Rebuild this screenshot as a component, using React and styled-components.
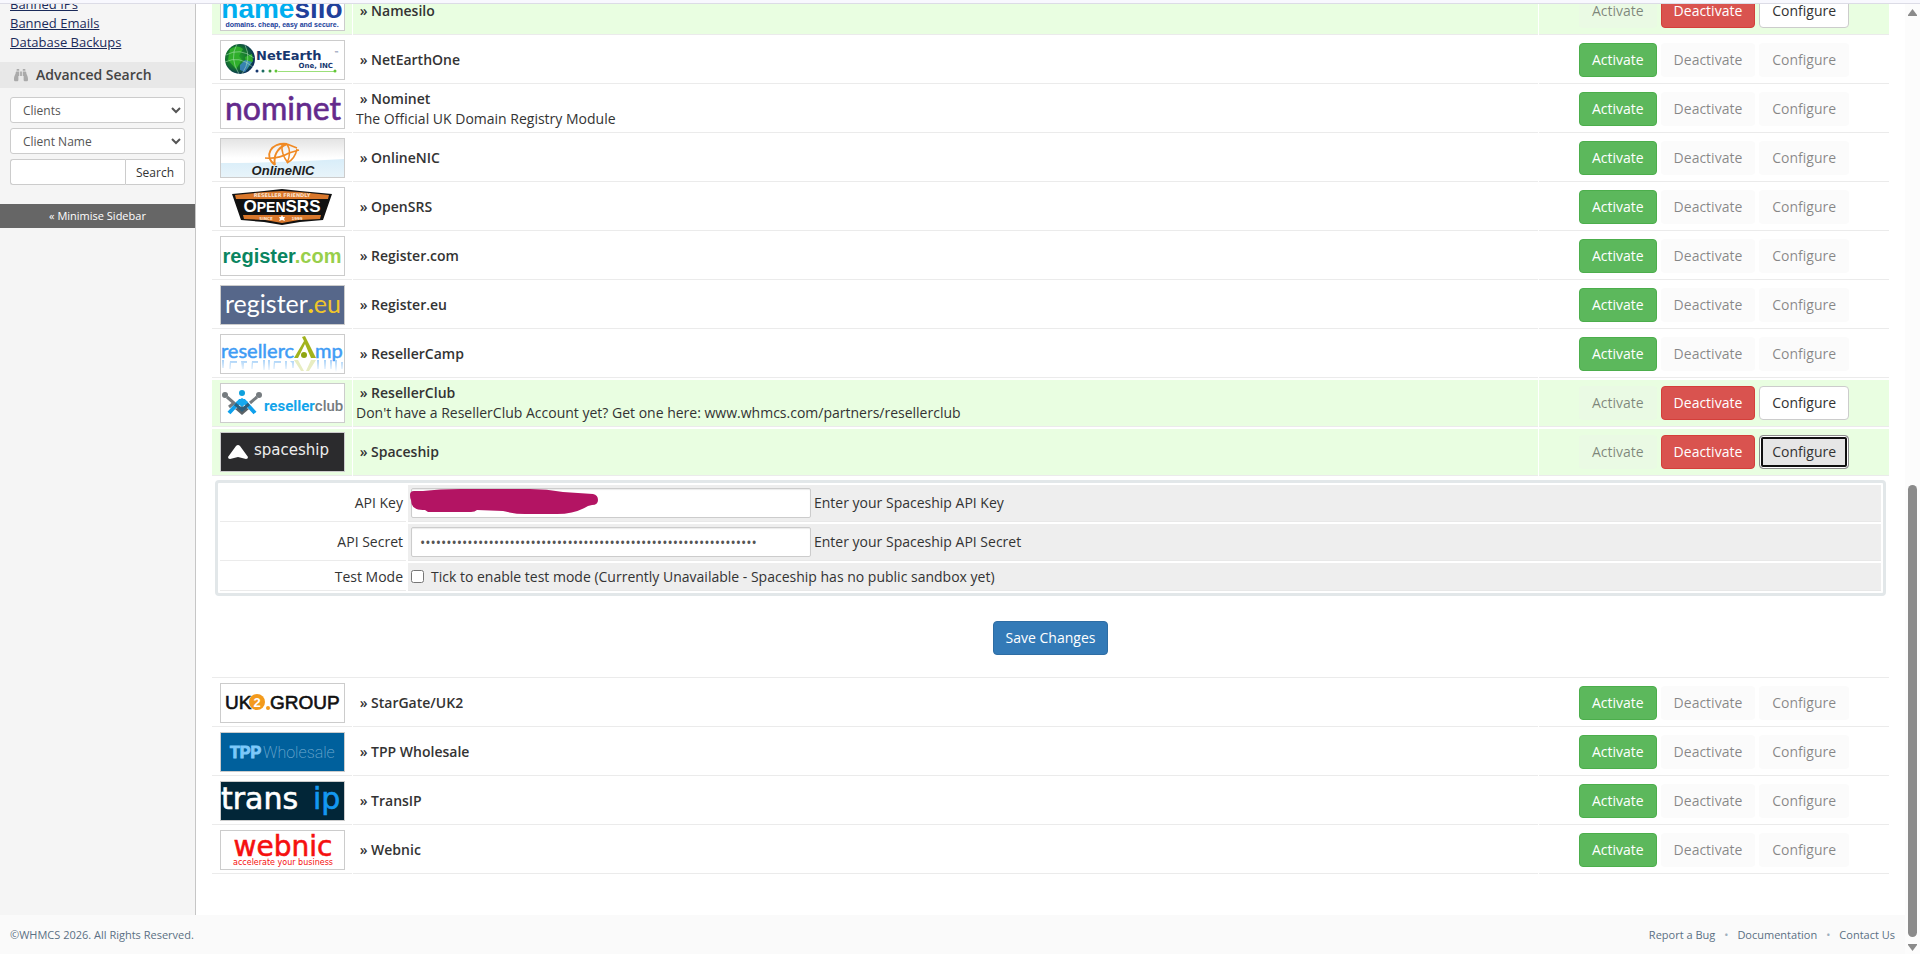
import styled, { createGlobalStyle, css } from "styled-components";
import { FaBinoculars } from "react-icons/fa";

const GlobalStyle = createGlobalStyle`
  * {
    box-sizing: border-box;
  }

  body {
    margin: 0;
    background: #fff;
    color: #333;
    font-family: "Open Sans", "Noto Sans", sans-serif;
    font-size: 14px;
    line-height: 20px;
  }

  button,
  input,
  select {
    font-family: inherit;
  }
`;

const Window = styled.div`
  display: flex;
  flex-direction: column;
  height: 100vh;
  overflow: hidden;
`;

const TopStrip = styled.div`
  flex: none;
  height: 4px;
  background: #f8f8fe;
  border-bottom: 1px solid #dcdce6;
`;

const Viewport = styled.div`
  display: flex;
  flex: 1;
  min-height: 0;
`;

const Scroller = styled.div`
  flex: 1;
  min-width: 0;
  overflow: hidden;
`;

// the page sits scrolled, so its first row runs under the top strip
const Scrolled = styled.div`
  margin-top: -18px;
`;

const Columns = styled.div`
  display: flex;
`;

const Footer = styled.footer`
  display: flex;
  align-items: center;
  justify-content: space-between;
  height: 39px;
  padding: 0 10px;
  background: #fafafa;
  color: #5a7084;
  font-size: 11px;
`;

const FooterLinks = styled.nav`
  display: flex;
  gap: 9px;

  a {
    color: inherit;
    text-decoration: none;
  }

  span {
    color: #9fb0bf;
  }
`;

/* scrollbar */

const Scrollbar = styled.div`
  display: flex;
  flex: none;
  flex-direction: column;
  align-items: center;
  width: 15px;
  padding: 5px 0 3px;
  background: #fcfcfc;
`;

const Thumb = styled.div`
  width: 9px;
  height: 48%;
  margin: auto 0 7px;
  border-radius: 5px;
  background: #8b8b8b;
`;

/* sidebar */

const Sidebar = styled.aside`
  flex: none;
  width: 196px;
  padding-top: 9px;
  border-right: 1px solid #c6c6c6;
  background: #f5f5f5;
`;

const LinkList = styled.ul`
  margin: 0 0 10px;
  padding: 0 10px;
  list-style: none;
  font-size: 13px;
  line-height: 19px;

  a {
    color: #1a2a5a;
  }
`;

const SidebarHeader = styled.h2`
  display: flex;
  align-items: center;
  gap: 8px;
  height: 26px;
  margin: 0;
  padding: 0 14px;
  background: #e8e8e8;
  color: #444;
  font-size: 14px;
  font-weight: 600;

  svg {
    color: #aaa;
  }
`;

const SearchForm = styled.form`
  display: flex;
  flex-direction: column;
  gap: 5px;
  padding: 9px 10px 19px;
`;

const control = css`
  height: 26px;
  border: 1px solid #ccc;
  border-radius: 3px;
  background: #fff;
  color: #555;
  font-size: 12px;
`;

const Select = styled.select`
  ${control}
  width: 100%;
  padding: 0 8px;
`;

const SearchGroup = styled.div`
  display: flex;
`;

const SearchInput = styled.input`
  ${control}
  flex: 1;
  min-width: 0;
  border-right: 0;
  border-radius: 3px 0 0 3px;
`;

const SearchButton = styled.button`
  ${control}
  width: 60px;
  padding: 0;
  border-radius: 0 3px 3px 0;
  color: #333;
`;

const MinimiseLink = styled.a`
  display: block;
  height: 24px;
  background: #666;
  color: #fff;
  font-size: 11px;
  line-height: 24px;
  text-align: center;
  text-decoration: none;
`;

/* registrar table */

const Main = styled.main`
  flex: 1;
  min-width: 0;
  padding: 0 15px 39px;
`;

const Registrars = styled.table`
  width: 100%;
  border-spacing: 1px 2px;
  table-layout: fixed;
`;

const LogoCol = styled.col`
  width: 140px;
`;

const ActionCol = styled.col`
  width: 350px;
`;

const Cell = styled.td`
  height: 47px;
  padding: 0 3px;
  border-bottom: 1px solid #ebebeb;
  background: ${(props) => (props.$active ? "#e9fee1" : "#fff")};
  text-align: ${(props) => props.$align || "left"};
  vertical-align: middle;
`;

const Name = styled.strong`
  display: block;
  font-weight: 600;
`;

const LogoBox = styled.div`
  width: 125px;
  height: 40px;
  margin: 0 auto;
  border: 1px solid #ccc;
  background: ${(props) => props.$bg || "#fff"};

  svg {
    display: block;
    width: 100%;
    height: 100%;
  }
`;

const Actions = styled.div`
  display: flex;
  justify-content: center;
  gap: 4px;
`;

const variants = {
  success: css`
    border-color: #4cae4c;
    background: #5cb85c;
    color: #fff;
  `,
  danger: css`
    border-color: #d43f3a;
    background: #d9534f;
    color: #fff;
  `,
  primary: css`
    border-color: #2e6da4;
    background: #337ab7;
    color: #fff;
  `,
  plain: css`
    border-color: #ccc;
    background: #fff;
    color: #333;
  `,
  focused: css`
    border-color: #8c8c8c;
    background: #e6e6e6;
    box-shadow: inset 0 0 0 1px #fff, inset 0 0 0 3px #101010;
    color: #333;
  `,
};

const Button = styled.button`
  height: 34px;
  padding: 0 12px;
  border: 1px solid transparent;
  border-radius: 4px;
  font-size: 14px;
  line-height: 20px;
  ${(props) => variants[props.$variant]}

  &:disabled {
    border-color: transparent;
    background: rgba(239, 239, 239, 0.25);
    color: rgba(16, 16, 16, 0.5);
  }
`;

/* module settings */

const ConfigCell = styled.td`
  padding: 2px 3px 22px;
  border-bottom: 1px solid #ebebeb;
`;

const Settings = styled.table`
  width: 100%;
  border: 3px solid #e2e7e9;
  border-radius: 4px;
  border-spacing: 2px;
  table-layout: fixed;
`;

const SettingLabel = styled.th`
  width: 186px;
  padding: 3px;
  border-bottom: 1px solid #ebebeb;
  font-weight: 400;
  text-align: right;
`;

const SettingField = styled.td`
  height: 28px;
  padding: 3px;
  border-bottom: 1px solid #e8e8e8;
  background: #eee;
`;

const FieldLine = styled.div`
  display: flex;
  align-items: center;
  gap: 3px;
`;

const Masked = styled.span`
  position: relative;
  width: 400px;

  svg {
    position: absolute;
    top: 0;
    left: -2px;
  }
`;

const TextInput = styled.input`
  display: block;
  width: 100%;
  height: 30px;
  padding: 4px 8px;
  border: 1px solid #ccc;
  border-radius: 2px;
  box-shadow: inset 0 1px 1px rgba(0, 0, 0, 0.08);
  color: #555;
  font-size: 14px;
`;

const CheckLabel = styled.label`
  display: flex;
  align-items: center;
  gap: 7px;

  input {
    width: 13px;
    height: 13px;
    margin: 0;
  }
`;

const SaveRow = styled.div`
  display: flex;
  justify-content: center;
  margin-top: 25px;
`;

/* logos, all on a 123 x 38 canvas */

const sans = "Liberation Sans, sans-serif";
const wide = "DejaVu Sans, sans-serif";

const logos = {
  namesilo: (
    <>
      <text x="61" y="26" textAnchor="middle" fontFamily={sans} fontWeight="700" fontSize="28">
        <tspan fill="#00aeef">name</tspan>
        <tspan fill="#21409a">silo</tspan>
      </text>
      <text x="61" y="35" textAnchor="middle" fill="#21409a" fontFamily={sans} fontWeight="700" fontSize="7">
        domains. cheap, easy and secure.
      </text>
    </>
  ),
  netearth: (
    <>
      <defs>
        <radialGradient id="globe" cx="0.4" cy="0.45" r="0.6">
          <stop offset="0" stopColor="#25a52b" />
          <stop offset="0.6" stopColor="#14722f" />
          <stop offset="1" stopColor="#0b2a5c" />
        </radialGradient>
      </defs>
      <circle cx="19" cy="18" r="15" fill="url(#globe)" />
      <path d="M9 8q8-5 13 0l-4 7 3 4-6 9-8-9zM24 16l7-3 1 7-6 8z" fill="#2fae2b" />
      <path d="M19 24l5-5 7 2-7 10-5-2z" fill="#3f86cf" opacity="0.8" />
      <path d="M5 14q14-8 28 3M4 21q14-7 28 5M16 3q-8 14 2 30M24 4q7 14-3 29" fill="none" stroke="#b9e6c0" strokeWidth="0.5" />
      <text x="35" y="19" fill="#17376f" fontFamily={wide} fontWeight="700" fontSize="13">
        NetEarth
      </text>
      <text x="113" y="14" fill="#17376f" fontFamily={wide} fontSize="5">
        ™
      </text>
      <text x="112" y="27" textAnchor="end" fill="#17376f" fontFamily={wide} fontWeight="700" fontSize="7">
        One, INC
      </text>
      <path d="M57 30.500h57" stroke="#9be07a" />
      <circle cx="36" cy="30" r="1.500" fill="#17376f" />
      <circle cx="42" cy="30" r="1.500" fill="#1c6b62" />
      <circle cx="49" cy="30" r="1.500" fill="#3f9c3a" />
      <circle cx="55" cy="30" r="1.500" fill="#62c637" />
      <circle cx="114" cy="30" r="1.500" fill="#62c637" />
    </>
  ),
  nominet: (
    <text
      x="62"
      y="30"
      textAnchor="middle"
      fill="#642a8c"
      stroke="#642a8c"
      strokeWidth="0.6"
      fontFamily="Lato, sans-serif"
      fontSize="32"
    >
      nominet
    </text>
  ),
  onlinenic: (
    <>
      <defs>
        <linearGradient id="nicTop" x2="0" y2="1">
          <stop offset="0" stopColor="#e4e4e4" />
          <stop offset="0.5" stopColor="#fff" />
        </linearGradient>
        <linearGradient id="nicSea" x2="0" y2="1">
          <stop offset="0" stopColor="#d8edf9" />
          <stop offset="1" stopColor="#e8f4fa" />
        </linearGradient>
      </defs>
      <rect width="123" height="38" fill="url(#nicTop)" />
      <path d="M0 24q60 0 123-4v18H0z" fill="url(#nicSea)" />
      <g fill="none" stroke="#f08a24" strokeWidth="1.500">
        <path d="M66 5C50 3 42 17 54 26M54 26C52 17 56 9 66 5" strokeWidth="2" />
        <path d="M61 6q-1 9 6 18M66 5q5 8 0 19M44 19q14 1 24-5l10-3M66 24q8-4 10-14M66 5l10 4" />
      </g>
      <text x="62" y="36" textAnchor="middle" fill="#1d1d1d" fontFamily={sans} fontWeight="700" fontStyle="italic" fontSize="13">
        OnlineNIC
      </text>
    </>
  ),
  opensrs: (
    <>
      <path d="M11 6L43 3 61 1l18 2 32 3-9 26-23 2-18 3-18-3-23-2z" fill="#111" />
      <path d="M14 7l30-3 17-1 17 1 30 3-1 4H15zM22 27h78l-1 4-21 1-17 3-17-3-21-1z" fill="#d9772b" />
      <text x="61" y="9" textAnchor="middle" fill="#fbe3cf" fontFamily={wide} fontWeight="700" fontSize="5">
        RESELLER FRIENDLY
      </text>
      <text x="61" y="24" textAnchor="middle" fill="#fff" fontFamily={sans} fontWeight="700" fontSize="17">
        O<tspan fontSize="14">PEN</tspan>SRS
      </text>
      <text x="45" y="32" textAnchor="middle" fill="#fbe3cf" fontFamily={wide} fontWeight="700" fontSize="4">
        SINCE
      </text>
      <text x="76" y="32" textAnchor="middle" fill="#fbe3cf" fontFamily={wide} fontWeight="700" fontSize="4">
        1999
      </text>
      <path d="M61 27l1 2h2l-1 2 1 2-3-1-3 1 1-2-1-2h2z" fill="#fff" />
    </>
  ),
  registercom: (
    <text x="61" y="26" textAnchor="middle" fill="#0a8560" fontFamily={sans} fontWeight="700" fontSize="20">
      register<tspan fill="#98cf4b">.com</tspan>
    </text>
  ),
  registereu: (
    <text x="62" y="27" textAnchor="middle" fill="#fff" fontFamily="Lato, sans-serif" fontSize="25">
      register<tspan fill="#f6cf1b" fontWeight="900">.</tspan>
      <tspan fill="#f0c62a">eu</tspan>
    </text>
  ),
  resellercamp: (
    <>
      <defs>
        <linearGradient id="campFade" x2="0" y2="1">
          <stop offset="0" stopColor="#a9d2f8" />
          <stop offset="1" stopColor="#fff" />
        </linearGradient>
      </defs>
      <text y="23" fill="#3f9cf5" stroke="#3f9cf5" strokeWidth="0.5" fontFamily="Lato, sans-serif" fontSize="20">
        <tspan x="0">resellerc</tspan>
        <tspan x="94">mp</tspan>
      </text>
      <path d="M73 23L83 6l-2-4 3-1 11 22h-5L84 9l-7 14z" fill="#a2b31c" />
      <circle cx="83" cy="20" r="3" fill="#8fa510" />
      <path
        d="M1 25h2v8H1zM9 26h7v2h-6v6H8zM20 26h6v2h-3v6h-2zM31 26h6v2h-5v6h-2zM42 25h2v10h-2zM47 25h2v10h-2zM53 26h7v2h-6v6h-2zM64 26h2v8h-2zM69 26h4v7h-2v-5zM96 25h2v9h-2zM103 25h2v9h-2zM109 25h2v9h-2zM114 25h2v12h-2zM120 27h2v7h-2z"
        fill="url(#campFade)"
      />
      <path d="M73 25h4l6 11h-3zM90 25h5l-7 11h-3z" fill="#e8edc2" />
    </>
  ),
  resellerclub: (
    <>
      <circle cx="4" cy="11" r="3" fill="#757b7f" />
      <circle cx="38" cy="11" r="3" fill="#757b7f" />
      <circle cx="21" cy="9" r="3" fill="#0fa0dc" />
      <path d="M6 13l7 6-5 4M36 13l-7 6" fill="none" stroke="#757b7f" strokeWidth="3" />
      <path d="M14 25l7-3 7 3-7 6z" fill="#5b6266" />
      <path d="M8 29l11-12h4l11 12" fill="none" stroke="#0fa0ec" strokeWidth="4" />
      <path d="M14 20l7 6 7-6" fill="none" stroke="#2c5f7d" strokeWidth="3" />
      <path d="M15 18l6-4 6 4-6 5z" fill="#17a9ee" />
      <text x="43" y="27" fill="#12a4ea" fontFamily="Roboto, sans-serif" fontWeight="700" fontSize="15">
        reseller<tspan fill="#757b7f" fontWeight="500">club</tspan>
      </text>
    </>
  ),
  spaceship: (
    <>
      <path d="M17 12q1 0 2 1l8 11q0 2-2 2l-8-2-8 2q-2 0-2-2l8-11q1-1 2-1z" fill="#fff" />
      <text x="33" y="22" fill="#eee" fontFamily={wide} fontSize="15">
        spaceship
      </text>
    </>
  ),
  uk2: (
    <>
      <circle cx="36" cy="18" r="8" fill="#f39a1c" />
      <circle cx="47" cy="24" r="2" fill="#f39a1c" />
      <text y="25" fill="#111" stroke="#111" strokeWidth="0.6" fontFamily={sans} fontSize="19">
        <tspan x="4">UK</tspan>
        <tspan x="49">GROUP</tspan>
      </text>
      <text x="36" y="23" textAnchor="middle" fill="#fff" fontFamily={sans} fontWeight="700" fontSize="13">
        2
      </text>
    </>
  ),
  tpp: (
    <>
      <text x="9" y="25" fill="#7cc8fa" stroke="#7cc8fa" fontFamily={sans} fontWeight="700" fontSize="16">
        TPP
      </text>
      <text x="42" y="25" fill="#6fa9cf" fontFamily="Roboto, sans-serif" fontWeight="200" fontSize="16">
        Wholesale
      </text>
    </>
  ),
  transip: (
    <text y="27" fill="#fff" stroke="#fff" strokeWidth="0.6" fontFamily={wide} fontSize="30">
      <tspan x="0">trans</tspan>
      <tspan x="92" fill="#1498f0" stroke="#1498f0">
        ip
      </tspan>
    </text>
  ),
  webnic: (
    <>
      <text x="62" y="25" textAnchor="middle" fill="#f5100f" stroke="#f5100f" strokeWidth="0.6" fontFamily={wide} fontSize="28">
        webnic
      </text>
      <text x="62" y="34" textAnchor="middle" fill="#f5100f" fontFamily={wide} fontSize="8">
        accelerate your business
      </text>
    </>
  ),
};

const before = [
  { logo: "namesilo", name: "Namesilo", active: true },
  { logo: "netearth", name: "NetEarthOne" },
  { logo: "nominet", name: "Nominet", note: "The Official UK Domain Registry Module" },
  { logo: "onlinenic", name: "OnlineNIC" },
  { logo: "opensrs", name: "OpenSRS" },
  { logo: "registercom", name: "Register.com" },
  { logo: "registereu", name: "Register.eu", bg: "#56678a" },
  { logo: "resellercamp", name: "ResellerCamp" },
  {
    logo: "resellerclub",
    name: "ResellerClub",
    active: true,
    note: "Don't have a ResellerClub Account yet? Get one here: www.whmcs.com/partners/resellerclub",
  },
  { logo: "spaceship", name: "Spaceship", active: true, bg: "#2b2b2d", open: true },
];

const after = [
  { logo: "uk2", name: "StarGate/UK2" },
  { logo: "tpp", name: "TPP Wholesale", bg: "#00609c" },
  { logo: "transip", name: "TransIP", bg: "#022638" },
  { logo: "webnic", name: "Webnic" },
];

function RegistrarRow({ logo, name, note, active, bg, open }) {
  return (
    <tr>
      <Cell $active={active}>
        <LogoBox $bg={bg}>
          <svg viewBox="0 0 123 38" aria-hidden="true">
            {logos[logo]}
          </svg>
        </LogoBox>
      </Cell>
      <Cell $active={active}>
        <Name>&nbsp;» {name}</Name>
        {note}
      </Cell>
      <Cell $active={active} $align="center">
        <Actions>
          <Button type="button" $variant="success" disabled={active}>
            Activate
          </Button>
          <Button type="button" $variant="danger" disabled={!active}>
            Deactivate
          </Button>
          <Button type="button" $variant={open ? "focused" : "plain"} disabled={!active}>
            Configure
          </Button>
        </Actions>
      </Cell>
    </tr>
  );
}

function SpaceshipSettings() {
  return (
    <tr>
      <ConfigCell colSpan="3">
        <Settings>
          <tbody>
            <tr>
              <SettingLabel scope="row">
                <label htmlFor="apiKey">API Key</label>
              </SettingLabel>
              <SettingField>
                <FieldLine>
                  <Masked>
                    <TextInput id="apiKey" type="text" />
                    <svg width="190" height="28" aria-hidden="true">
                      <path
                        d="M1 7Q1 3 5 3H14Q30 1 51 1H121Q138 1 154 4L184 6Q189 7 189 12T183 17L179 18Q166 26 148 26H116Q106 26 94 23L68 22Q66 24 62 24H19L16 22Q2 23 2 12Q1 10 1 7Z"
                        fill="#b31463"
                      />
                    </svg>
                  </Masked>
                  Enter your Spaceship API Key
                </FieldLine>
              </SettingField>
            </tr>
            <tr>
              <SettingLabel scope="row">
                <label htmlFor="apiSecret">API Secret</label>
              </SettingLabel>
              <SettingField>
                <FieldLine>
                  <Masked>
                    <TextInput id="apiSecret" type="password" defaultValue={"x".repeat(64)} />
                  </Masked>
                  Enter your Spaceship API Secret
                </FieldLine>
              </SettingField>
            </tr>
            <tr>
              <SettingLabel scope="row">Test Mode</SettingLabel>
              <SettingField>
                <CheckLabel>
                  <input type="checkbox" />
                  Tick to enable test mode (Currently Unavailable - Spaceship has no public sandbox yet)
                </CheckLabel>
              </SettingField>
            </tr>
          </tbody>
        </Settings>
        <SaveRow>
          <Button type="submit" $variant="primary">
            Save Changes
          </Button>
        </SaveRow>
      </ConfigCell>
    </tr>
  );
}

function SidebarMenu() {
  return (
    <Sidebar>
      <LinkList>
        <li>
          <a href="#ips">Banned IPs</a>
        </li>
        <li>
          <a href="#emails">Banned Emails</a>
        </li>
        <li>
          <a href="#backups">Database Backups</a>
        </li>
      </LinkList>
      <SidebarHeader>
        <FaBinoculars size={14} />
        Advanced Search
      </SidebarHeader>
      <SearchForm>
        <Select aria-label="Search type">
          <option>Clients</option>
        </Select>
        <Select aria-label="Search field">
          <option>Client Name</option>
        </Select>
        <SearchGroup>
          <SearchInput type="text" aria-label="Search term" />
          <SearchButton type="button">Search</SearchButton>
        </SearchGroup>
      </SearchForm>
      <MinimiseLink href="#minimise">« Minimise Sidebar</MinimiseLink>
    </Sidebar>
  );
}

export default function App() {
  return (
    <Window>
      <GlobalStyle />
      <TopStrip />
      <Viewport>
        <Scroller>
          <Scrolled>
            <Columns>
              <SidebarMenu />
              <Main>
                <Registrars>
                  <colgroup>
                    <LogoCol />
                    <col />
                    <ActionCol />
                  </colgroup>
                  <tbody>
                    {before.map((item) => (
                      <RegistrarRow key={item.name} {...item} />
                    ))}
                    <SpaceshipSettings />
                    {after.map((item) => (
                      <RegistrarRow key={item.name} {...item} />
                    ))}
                  </tbody>
                </Registrars>
              </Main>
            </Columns>
            <Footer>
              <span>©WHMCS 2026. All Rights Reserved.</span>
              <FooterLinks>
                <a href="#bug">Report a Bug</a>
                <span>•</span>
                <a href="#docs">Documentation</a>
                <span>•</span>
                <a href="#contact">Contact Us</a>
              </FooterLinks>
            </Footer>
          </Scrolled>
        </Scroller>
        <Scrollbar aria-hidden="true">
          <svg width="9" height="7">
            <path d="M4.500 0L9 6V7H0V6Z" fill="#8b8b8b" />
          </svg>
          <Thumb />
          <svg width="9" height="7">
            <path d="M4.500 7L9 1V0H0V1Z" fill="#8b8b8b" />
          </svg>
        </Scrollbar>
      </Viewport>
    </Window>
  );
}
